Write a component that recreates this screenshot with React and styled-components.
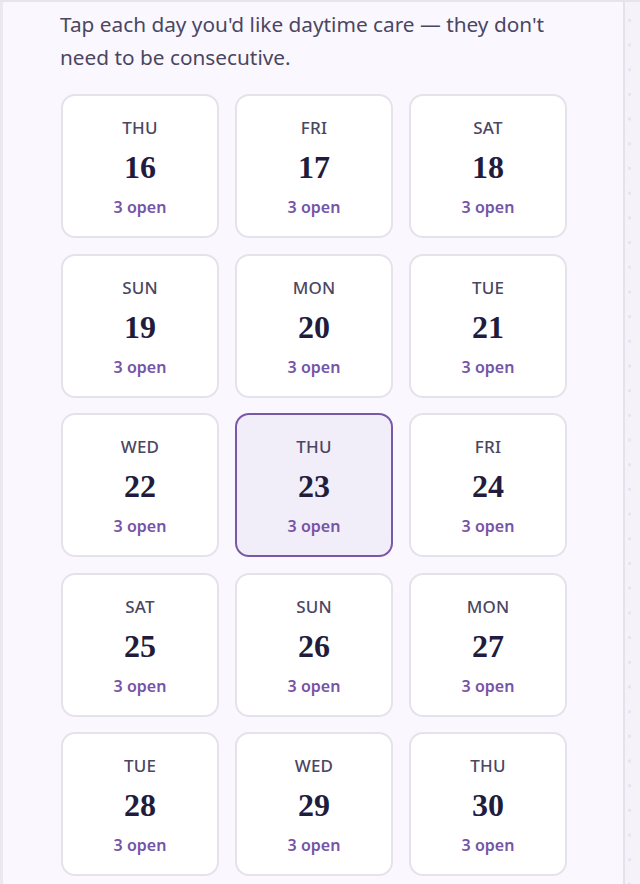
import React from 'react';
import styled, { createGlobalStyle } from 'styled-components';

const GlobalStyle = createGlobalStyle`
  html, body {
    margin: 0;
    padding: 0;
    background: #f4f2f8;
  }
  #root {
    min-height: 884px;
  }
`;

const days = [
  ['THU', 16], ['FRI', 17], ['SAT', 18],
  ['SUN', 19], ['MON', 20], ['TUE', 21],
  ['WED', 22], ['THU', 23], ['FRI', 24],
  ['SAT', 25], ['SUN', 26], ['MON', 27],
  ['TUE', 28], ['WED', 29], ['THU', 30],
];

const Frame = styled.div`
  display: flex;
  height: 884px;
  overflow: hidden;
  border-top: 2px solid #e7e4ee;
  box-sizing: border-box;
`;

const Panel = styled.main`
  flex: 0 0 625px;
  background: #faf8fe;
  border-left: 3px solid #ebe8f0;
  border-right: 2px solid #e6e2ed;
  box-sizing: border-box;
  padding: 6px 0 0 57px;
`;

const Rail = styled.div`
  flex: 1;
  background-color: #f5f3f9;
  background-image: radial-gradient(circle, #e8e5ee 1.5px, transparent 2px);
  background-size: 15px 24.7px;
  background-position: -3px 6px;
`;

const Intro = styled.p`
  margin: 0 0 20px;
  width: 505px;
  font-family: 'Noto Sans', sans-serif;
  font-size: 20.8px;
  line-height: 33px;
  color: #4b4662;
`;

const Grid = styled.div`
  display: grid;
  grid-template-columns: repeat(3, 158px);
  grid-auto-rows: 144px;
  column-gap: 16px;
  row-gap: 15.5px;
  padding-left: 1px;
`;

const DayCard = styled.button`
  display: flex;
  flex-direction: column;
  align-items: center;
  padding: 21px 0 0;
  margin: 0;
  box-sizing: border-box;
  border-radius: 14px;
  border: 2px solid ${(p) => (p.$selected ? '#7a58a8' : '#e6e2ec')};
  background: ${(p) => (p.$selected ? '#f1edf9' : '#ffffff')};
  cursor: pointer;
`;

const Weekday = styled.span`
  font-family: 'Noto Sans', sans-serif;
  font-size: 17px;
  font-weight: 500;
  line-height: 22px;
  color: #4b4662;
  letter-spacing: 0.2px;
`;

const DayNumber = styled.span`
  margin-top: 8px;
  font-family: 'Liberation Serif', serif;
  font-weight: 700;
  font-size: 32px;
  line-height: 40px;
  color: #211c3d;
`;

const Openings = styled.span`
  margin-top: 10px;
  font-family: 'Noto Sans', sans-serif;
  font-size: 16px;
  font-weight: 600;
  line-height: 20px;
  color: #7654a6;
`;

export default function App() {
  return (
    <>
      <GlobalStyle />
      <Frame>
        <Panel>
          <Intro>
            Tap each day you'd like daytime care — they don't need to be
            consecutive.
          </Intro>
          <Grid>
            {days.map(([wd, n]) => (
              <DayCard key={n} type="button" $selected={n === 23}>
                <Weekday>{wd}</Weekday>
                <DayNumber>{n}</DayNumber>
                <Openings>3 open</Openings>
              </DayCard>
            ))}
          </Grid>
        </Panel>
        <Rail />
      </Frame>
    </>
  );
}
